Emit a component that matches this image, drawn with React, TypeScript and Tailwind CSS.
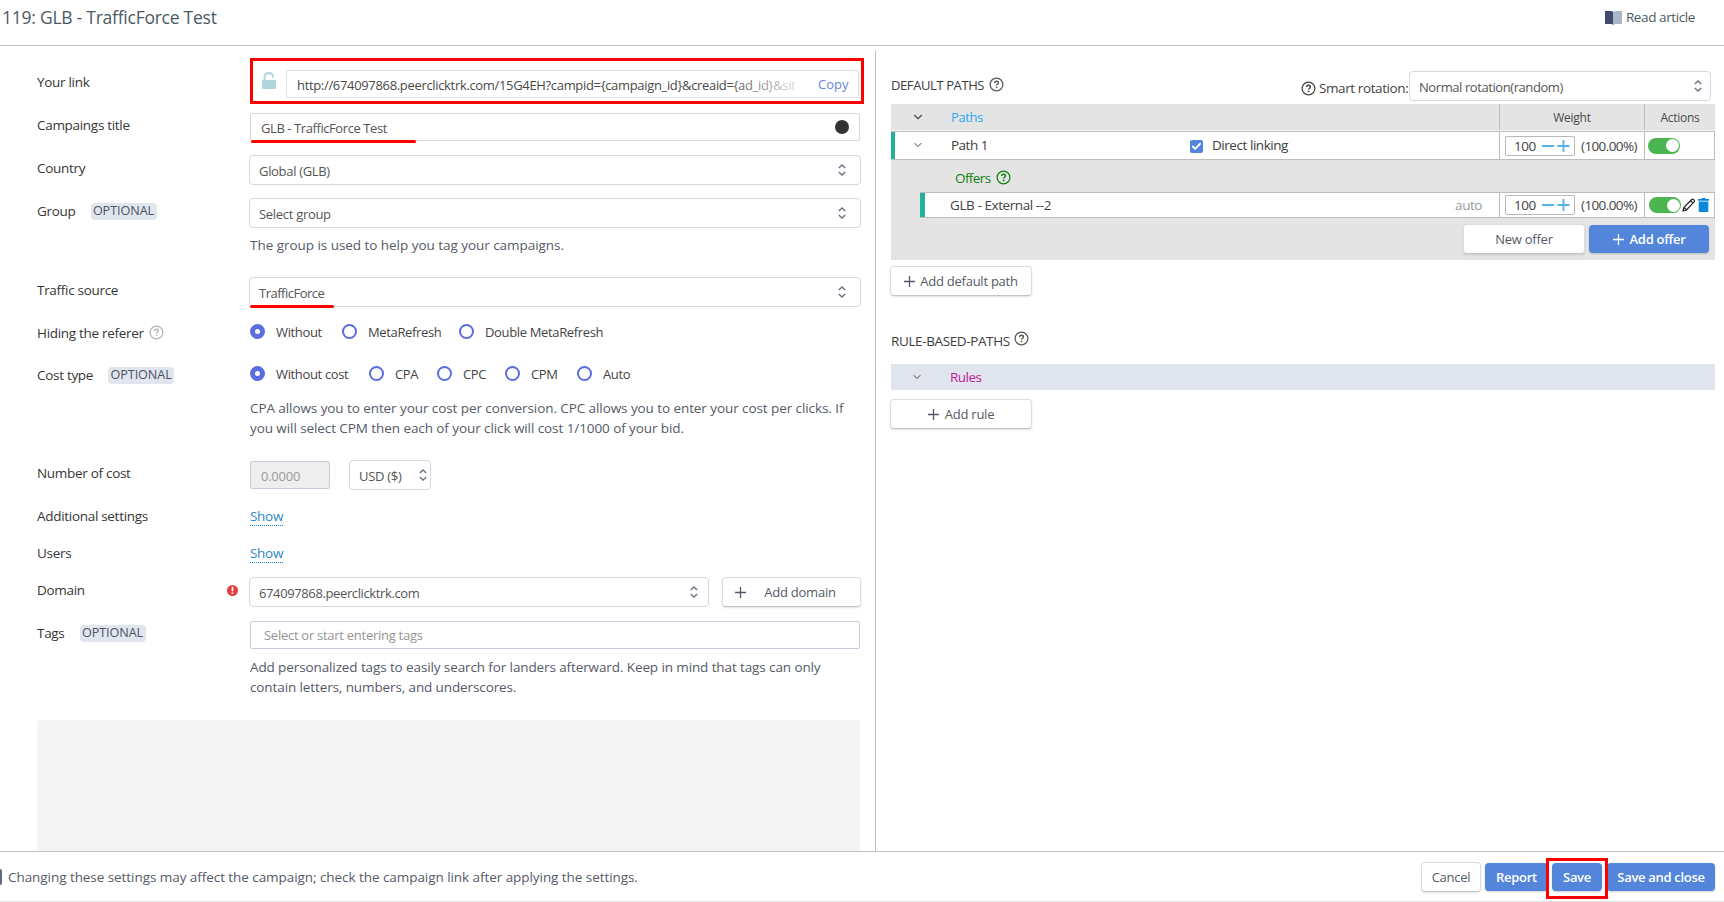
import type { ReactNode } from 'react';
import { Check, ChevronDown } from 'lucide-react';

function QuestionIcon({ className = '' }: { className?: string }) {
  return (
    <svg viewBox="0 0 16 16" className={`w-[15px] h-[15px] shrink-0 ${className}`} fill="none" stroke="currentColor">
      <circle cx="8" cy="8" r="6.8" strokeWidth="1.3" />
      <path d="M6 6.500c0-1.300.9-2 2-2s2 .7 2 1.800c0 1.400-1.900 1.400-1.900 2.800" strokeWidth="1.5" />
      <path d="M8.100 10.300v1.600" strokeWidth="1.7" />
    </svg>
  );
}

function UpDownIcon() {
  return (
    <svg viewBox="0 0 8 12" className="w-2 h-3 shrink-0 text-[#6b7488]" fill="none" stroke="currentColor" strokeWidth="1.5">
      <path d="M.8 4 4 1l3.2 3M.8 8 4 11l3.2-3" />
    </svg>
  );
}

function PlusIcon({ className = 'w-[11px] h-[11px]' }: { className?: string }) {
  return (
    <svg viewBox="0 0 11 11" className={`shrink-0 ${className}`} stroke="currentColor" strokeWidth="1.3">
      <path d="M5.5 0v11M0 5.5h11" />
    </svg>
  );
}

function Select({ className, children }: { className: string; children: ReactNode }) {
  return (
    <div className={`flex items-center justify-between h-[30px] shrink-0 border border-[#d5d7de] rounded-[4px] bg-white pl-[9px] text-[13px] text-[#555] ${className}`}>
      <span className="pt-[2px]">{children}</span>
      <UpDownIcon />
    </div>
  );
}

function Row({ label, labelClass, className, optional, help, children }: {
  label: string;
  labelClass: string;
  className: string;
  optional?: boolean;
  help?: boolean;
  children: ReactNode;
}) {
  return (
    <div className={`flex ${className}`}>
      <div className={`flex w-[213px] shrink-0 h-5 items-center text-[#363636] font-medium box-content ${labelClass}`}>
        <span className="tracking-[-0.3px]">{label}</span>
        {help && <QuestionIcon className="ml-[5px] -mt-[2px] text-[#b5b5b5]" />}
        {optional && (
          <span className="ml-[15px] flex h-[17px] w-[66px] items-center justify-center rounded-[4px] bg-[#e1e6ee] text-[12.6px] tracking-[-0.05px] text-[#4b5263]">
            OPTIONAL
          </span>
        )}
      </div>
      <div className="w-[610px] shrink-0">{children}</div>
    </div>
  );
}

function Radio({ label, checked, className }: { label: string; checked?: boolean; className?: string }) {
  return (
    <label className={`flex items-center shrink-0 ${className}`}>
      <span className={`w-[15px] h-[15px] rounded-full border-[#5a6ee0] bg-white ${checked ? 'border-[5px]' : 'border-2'}`} />
      <span className="ml-[11px] mt-px text-[13px] tracking-[-0.35px] text-[#444] whitespace-nowrap">{label}</span>
    </label>
  );
}

function Toggle() {
  return (
    <span className="flex w-8 h-4 items-center justify-end rounded-full bg-[#4bb551] pr-[1px]">
      <span className="w-[13px] h-[13px] rounded-full bg-white" />
    </span>
  );
}

function WeightCell() {
  return (
    <div className="flex h-full w-[145px] shrink-0 items-center border-l border-[#bdbdbd] pl-[5px] text-[#444]">
      <div className="flex h-5 w-[70px] items-center rounded-[2px] border border-[#b9b9b9] pl-[8px] tracking-[-0.5px]">
        <span className="w-[27px]">100</span>
        <svg viewBox="0 0 29 12" className="w-[29px] h-3" stroke="#57b1e6" strokeWidth="1.8">
          <path d="M1 6h12M16.500 6h12M22.500 0v12" />
        </svg>
      </div>
      <span className="ml-[6px] tracking-[-0.6px]">(100.00%)</span>
    </div>
  );
}

const whiteButton =
  'flex items-center justify-center border border-[#dcdde2] border-b-[#c3c5cd] rounded-[4px] bg-white text-[13px] tracking-[-0.25px] text-[#555a68] shadow-[0_1px_2px_rgba(0,0,0,0.12)]';
const blueButton =
  'flex items-center justify-center rounded-[4px] bg-[#5386db] text-[13px] tracking-[-0.3px] font-semibold text-white shadow-[0_1px_2px_rgba(0,0,0,0.2)]';

function CampaignForm() {
  return (
    <section className="h-full w-[875px] shrink-0 overflow-hidden pl-[37px] pt-3">
      <Row label="Your link" className="h-[55px]" labelClass="pt-[14px]">
        <div className="flex h-[46px] w-[614px] items-center border-[3px] border-[#fe0000] pl-[9px]">
          <svg viewBox="0 0 14 17" className="w-[14px] h-[17px] mb-px shrink-0">
            <path d="M2.500 9V4.500A3.300 3.300 0 0 1 5.800 1.200h2A3.300 3.300 0 0 1 11 4.500v1" fill="none" stroke="#b0d5dc" strokeWidth="2" />
            <rect x="0" y="8" width="14" height="9" rx="1" fill="#b0d5dc" />
          </svg>
          <div className="ml-[10px] mt-[5px] flex h-7 w-[573px] items-center rounded-[2px] border border-[#d9dfe2] pl-[10px] text-[13px]">
            <span className="relative w-[501px] whitespace-nowrap pt-[2px] text-[#4a4a4a] tracking-[-0.33px]">
              {'http://674097868.peerclicktrk.com/15G4EH?campid={campaign_id}&creaid={ad_id}&sit'}
              <span className="absolute inset-y-0 right-0 w-[72px] bg-gradient-to-r from-white/0 to-white/85" />
            </span>
            <span className="ml-[20px] text-[#6a84dc]">Copy</span>
          </div>
        </div>
      </Row>

      <Row label="Campaings title" className="h-[42px]" labelClass="pt-[2px]">
        <div className="relative flex h-7 items-center justify-between rounded-[2px] border border-[#d5dadd] pl-[10px] pr-[10px] text-[13px] text-[#555]">
          <span className="pt-[2px] tracking-[-0.42px]">GLB - TrafficForce Test</span>
          <span className="w-[14px] h-[14px] rounded-full bg-[#333]" />
          <span className="absolute left-0 top-[26px] h-[3px] w-[165px] rounded-full bg-[#fe0000]" />
        </div>
      </Row>

      <Row label="Country" className="h-[43px]" labelClass="pt-[3px]">
        <Select className="-ml-px w-[612px] pr-[14px] tracking-[-0.32px]">Global (GLB)</Select>
      </Row>

      <Row label="Group" className="h-[79px]" labelClass="pt-[3px]" optional>
        <Select className="-ml-px w-[612px] pr-[14px] tracking-[-0.3px]">Select group</Select>
        <p className="mt-[7px] leading-5 tracking-[-0.04px] text-[#555a68]">The group is used to help you tag your campaigns.</p>
      </Row>

      <Row label="Traffic source" className="h-[45px]" labelClass="pt-[3px]">
        <div className="relative">
          <Select className="-ml-px w-[612px] pr-[14px] tracking-[-0.5px]">TrafficForce</Select>
          <span className="absolute left-0 top-7 h-[3px] w-[84px] rounded-full bg-[#fe0000]" />
        </div>
      </Row>

      <Row label="Hiding the referer" className="h-[42px]" labelClass="pt-[1px]" help>
        <div className="flex h-[19px] items-center">
          <Radio label="Without" checked className="w-[92px]" />
          <Radio label="MetaRefresh" className="w-[117px]" />
          <Radio label="Double MetaRefresh" />
        </div>
      </Row>

      <Row label="Cost type" className="h-24" labelClass="pt-[1px]" optional>
        <div className="flex h-[19px] items-center">
          <Radio label="Without cost" checked className="w-[119px]" />
          <Radio label="CPA" className="w-[68px]" />
          <Radio label="CPC" className="w-[68px]" />
          <Radio label="CPM" className="w-[72px]" />
          <Radio label="Auto" />
        </div>
        <p className="mt-[15px] leading-5 whitespace-nowrap tracking-[-0.08px] text-[#555a68]">
          CPA allows you to enter your cost per conversion. CPC allows you to enter your cost per clicks. If
          <br />
          you will select CPM then each of your click will cost 1/1000 of your bid.
        </p>
      </Row>

      <Row label="Number of cost" className="h-[46px]" labelClass="pt-[3px]">
        <div className="flex items-center">
          <div className="flex h-7 w-20 items-center rounded-[2px] border border-[#c3cddb] bg-[#eee] pl-[10px] pt-[2px] text-[13px] tracking-[-0.25px] text-[#999]">
            0.0000
          </div>
          <Select className="ml-[19px] w-[82px] pr-[3px] tracking-[-0.3px]">USD ($)</Select>
        </div>
      </Row>

      <Row label="Additional settings" className="h-[37px]" labelClass="">
        <span className="inline-block h-5 border-b border-dotted border-[#1283d0] leading-5 tracking-[-0.3px] text-[#2d86c9]">Show</span>
      </Row>

      <Row label="Users" className="h-[34px]" labelClass="">
        <span className="inline-block h-5 border-b border-dotted border-[#1283d0] leading-5 tracking-[-0.3px] text-[#2d86c9]">Show</span>
      </Row>

      <Row label="Domain" className="h-11" labelClass="pt-[3px]">
        <div className="relative flex">
          <svg viewBox="0 0 11 11" className="absolute -left-[23px] top-2 w-[11px] h-[11px]">
            <circle cx="5.500" cy="5.500" r="5.500" fill="#e53e3e" />
            <path d="M5.500 1.800v4.500M5.500 7.400v1.600" stroke="#fff" strokeWidth="1.700" />
          </svg>
          <Select className="-ml-px w-[460px] pr-[10px] tracking-[-0.38px]">674097868.peerclicktrk.com</Select>
          <button className={`ml-[13px] h-[30px] w-[139px] shrink-0 ${whiteButton}`}>
            <PlusIcon className="w-[11px] h-[11px] mr-[18px] -ml-[12px]" />
            Add domain
          </button>
        </div>
      </Row>

      <Row label="Tags" className="h-[99px]" labelClass="pt-[2px]" optional>
        <div className="flex h-7 items-center rounded-[2px] border border-[#c3cddb] pl-[13px] text-[13px] tracking-[-0.27px] text-[#959595]">
          Select or start entering tags
        </div>
        <p className="mt-[8px] leading-5 whitespace-nowrap tracking-[-0.11px] text-[#555a68]">
          Add personalized tags to easily search for landers afterward. Keep in mind that tags can only
          <br />
          contain letters, numbers, and underscores.
        </p>
      </Row>

      <div className="h-[140px] w-[823px] rounded-[4px] bg-[#f4f4f4]" />
    </section>
  );
}

function Paths() {
  return (
    <section className="mt-1 h-[801px] w-[849px] border-l border-[#bfc1c6] pl-[15px] pt-[21px]">
      <div className="flex h-[33px] w-[820px] items-start text-[#3d3d3d]">
        <h2 className="mt-[4px] w-[94px] whitespace-nowrap text-[13px] font-medium tracking-[-0.4px]">DEFAULT PATHS</h2>
        <QuestionIcon className="ml-1 mt-[6px] text-[#555]" />
        <QuestionIcon className="ml-auto mt-[10px] text-[#444]" />
        <span className="ml-[3px] mt-[7px] w-[90px] shrink-0 whitespace-nowrap tracking-[-0.4px] text-[#444]">Smart rotation:</span>
        <Select className="w-[302px] pr-[8px] tracking-[-0.42px]">Normal rotation(random)</Select>
      </div>

      <div className="h-[156px] w-[824px] bg-[#e4e4e4]">
        <div className="flex h-[27px] items-center border-b border-[#f3f3f3] text-xs tracking-[-0.25px] text-[#4a4a4a]">
          <ChevronDown className="ml-[20px] w-[14px] h-[14px]" strokeWidth={2} />
          <span className="ml-[26px] pt-px text-[13px] tracking-[-0.4px] text-[#2aa9f3]">Paths</span>
          <span className="ml-auto flex h-full w-[145px] items-center justify-center border-l border-[#bdbdbd] pt-[2px]">Weight</span>
          <span className="flex h-full w-[71px] items-center justify-center border-l border-[#bdbdbd] pt-[2px]">Actions</span>
        </div>
        <div className="flex h-[29px] items-center border border-l-0 border-[#bdbdbd] bg-white text-[#3d3d3d]">
          <span className="h-full w-1 bg-[#23b197]" />
          <ChevronDown className="ml-[17px] w-3 h-3 mb-[2px]" />
          <span className="ml-[27px] -mt-px font-medium tracking-[-0.5px]">Path 1</span>
          <span className="ml-auto mt-px flex h-[13px] w-[13px] items-center justify-center rounded-[2px] bg-[#5386db] text-white">
            <Check className="w-[11px] h-[11px]" strokeWidth={4} />
          </span>
          <span className="ml-[9px] -mt-px w-[287px] tracking-[-0.45px]">Direct linking</span>
          <WeightCell />
          <div className="flex h-full w-[70px] items-center border-l border-[#bdbdbd] pl-[3px]">
            <Toggle />
          </div>
        </div>
        <div className="flex h-8 items-center pl-[64px] pt-[4px] tracking-[-0.6px] text-[#128012]">
          Offers
          <QuestionIcon className="ml-[5px] -mt-px" />
        </div>
        <div className="ml-[29px] flex h-[26px] items-center border border-l-0 border-[#bdbdbd] bg-white text-[#444]">
          <span className="h-full w-[5px] bg-[#23b197]" />
          <span className="ml-[25px] tracking-[-0.42px]">GLB - External --2</span>
          <span className="ml-auto mr-[17px] tracking-[-0.45px] text-[#999]">auto</span>
          <WeightCell />
          <div className="flex h-full w-[70px] items-center border-l border-[#bdbdbd] pl-[4px]">
            <Toggle />
            <svg viewBox="0 0 14 14" className="ml-[1px] w-[14px] h-[14px] shrink-0" fill="none" stroke="#222" strokeWidth="1.200">
              <path d="M1 13l1-3.600L9.700 1.500c1.200-1 3.400.800 2.400 2.300L4.500 12 1 13zM8.500 2.800l2.600 2.300M2.200 9.500l2.300 2.300" />
            </svg>
            <svg viewBox="0 0 11 14" className="ml-[2px] w-[11px] h-[14px] shrink-0" fill="#0c87da">
              <path d="M0 1h3.500V0h4v1H11v1.800H0zM.7 3.500h9.600V13a1 1 0 0 1-1 1H1.700a1 1 0 0 1-1-1z" />
            </svg>
          </div>
        </div>
        <div className="flex justify-end gap-1 pr-[6px] pt-[6px]">
          <button className={`h-[30px] w-[122px] ${whiteButton}`}>New offer</button>
          <button className={`mt-px h-7 w-[120px] gap-[6px] ${blueButton}`}>
            <PlusIcon />
            Add offer
          </button>
        </div>
      </div>

      <button className={`-ml-px mt-[6px] h-[30px] w-[142px] gap-[5px] ${whiteButton}`}>
        <PlusIcon />
        Add default path
      </button>

      <div className="mt-[34px] flex h-[34px] items-start text-[#3d3d3d]">
        <h2 className="w-[118px] whitespace-nowrap pt-[1px] font-medium tracking-[-0.38px]">RULE-BASED-PATHS</h2>
        <QuestionIcon className="ml-[5px] mt-[1px] text-[#555]" />
      </div>
      <div className="flex h-[26px] w-[824px] items-center bg-[#e1e6ee]">
        <ChevronDown className="ml-[20px] w-3 h-3 text-[#444]" />
        <span className="ml-[27px] tracking-[-0.5px] text-[#c3189a]">Rules</span>
      </div>
      <button className={`-ml-px mt-[9px] h-[30px] w-[142px] gap-[6px] ${whiteButton}`}>
        <PlusIcon />
        Add rule
      </button>
    </section>
  );
}

export default function App() {
  return (
    <div className="flex h-[902px] w-[1724px] flex-col overflow-hidden bg-white font-['Open_Sans','Noto_Sans',sans-serif] text-[13.500px] leading-5">
      <header className="flex h-[46px] shrink-0 items-start justify-between border-b border-[#bfc1c6] pl-[2px] pr-[29px] pt-[6px] text-[#4c5963]">
        <h1 className="text-[17.500px] font-medium leading-[22px] tracking-[-0.25px]">119: GLB - TrafficForce Test</h1>
        <span className="flex items-center pt-px font-medium tracking-[-0.4px]">
          <svg viewBox="0 0 17 14" className="mr-1 mt-px w-[17px] h-[14px]">
            <path d="M0 0h6.500l2 1v13l-2-1H0z" fill="#434a70" />
            <path d="M17 0h-6.500l-2 1v13l2-1H17z" fill="#aab7c6" />
          </svg>
          Read article
        </span>
      </header>

      <main className="flex h-[805px] shrink-0 overflow-hidden">
        <CampaignForm />
        <Paths />
      </main>

      <footer className="flex h-[51px] shrink-0 items-center border-y border-t-[#bfc1c6] border-b-[#e3e3e3] text-[#555a68]">
        <span className="h-4 w-[2px] rounded-r-full bg-[#5f6b80]" />
        <span className="ml-[6px] tracking-[-0.06px]">Changing these settings may affect the campaign; check the campaign link after applying the settings.</span>
        <div className="relative ml-auto mr-[9px] flex items-center">
          <button className={`h-[30px] w-[60px] ${whiteButton}`}>Cancel</button>
          <button className={`ml-1 h-7 w-[63px] ${blueButton}`}>Report</button>
          <button className={`ml-[4px] h-7 w-[50px] ${blueButton}`}>Save</button>
          <button className={`ml-[5px] h-7 w-[108px] ${blueButton}`}>Save and close</button>
          <span className="absolute left-[125px] -top-1 h-[41px] w-[62px] border-[3px] border-[#fe0000]" />
        </div>
      </footer>
    </div>
  );
}
